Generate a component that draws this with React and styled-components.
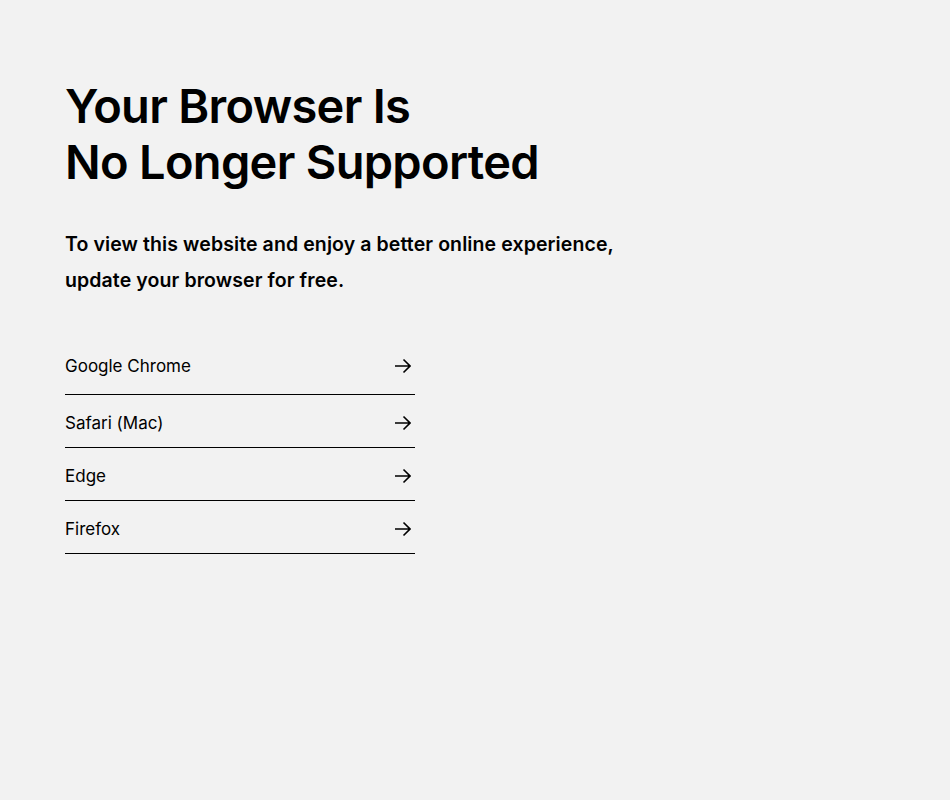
import React from "react";
import styled, { createGlobalStyle } from "styled-components";

const GlobalStyle = createGlobalStyle`
  html {
    overflow-y: scroll;
  }
  body {
    margin: 0;
    background-color: #f2f2f2;
    font-family: Inter, "Noto Sans", sans-serif;
    color: #000;
  }
`;

const Page = styled.main`
  padding: 78px 65px 0;
  min-height: 100vh;
  box-sizing: border-box;
`;

const Title = styled.h1`
  margin: 0;
  font-size: 47px;
  line-height: 56px;
  font-weight: 600;
  letter-spacing: -0.7px;
`;

const Subtitle = styled.p`
  margin: 36px 0 0;
  font-size: 19.5px;
  line-height: 36px;
  font-weight: 600;
  letter-spacing: 0.1px;
`;

const BrowserList = styled.ul`
  list-style: none;
  margin: 44px 0 0;
  padding: 0;
  width: 350px;
`;

const BrowserItem = styled.li`
  border-bottom: 1px solid #000;
`;

const BrowserLink = styled.a`
  display: flex;
  align-items: center;
  justify-content: space-between;
  padding: ${({ $first }) => ($first ? "14px 4px 18px 0" : "18px 4px 14px 0")};
  font-size: 17px;
  line-height: 20px;
  color: #000;
  text-decoration: none;
`;

const Arrow = () => (
  <svg width="16" height="16" viewBox="0 0 16 16" fill="none" stroke="#000" strokeWidth="1.6">
    <path d="M0 8h15M8.5 1.5L15 8l-6.5 6.5" />
  </svg>
);

const browsers = ["Google Chrome", "Safari (Mac)", "Edge", "Firefox"];

export default function App() {
  return (
    <>
      <GlobalStyle />
      <Page>
        <Title>
          Your Browser Is
          <br />
          No Longer Supported
        </Title>
        <Subtitle>
          To view this website and enjoy a better online experience,
          <br />
          update your browser for free.
        </Subtitle>
        <BrowserList>
          {browsers.map((name, i) => (
            <BrowserItem key={name}>
              <BrowserLink href="#" $first={i === 0}>
                <span>{name}</span>
                <Arrow />
              </BrowserLink>
            </BrowserItem>
          ))}
        </BrowserList>
      </Page>
    </>
  );
}
